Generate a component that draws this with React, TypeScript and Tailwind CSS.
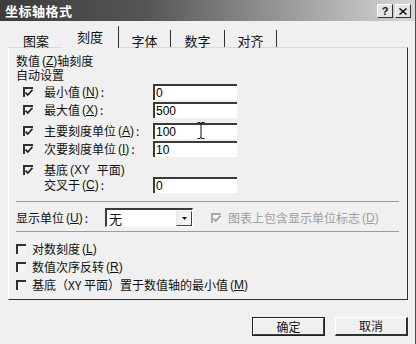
import React from "react";

const font = { fontFamily: '"Noto Sans CJK SC", "Liberation Sans", sans-serif' };

function Check({ checked, disabled }: { checked?: boolean; disabled?: boolean }) {
  const c = disabled ? "#9a9a9a" : "#202020";
  return (
    <div
      className={`relative w-[10px] h-[10px] shrink-0 border-t-2 border-l-2 ${
        disabled ? "border-[#a8a8a8]" : "border-[#303030]"
      } bg-[#f4f4f4]`}
    >
      {checked && (
        <svg width="8" height="8" viewBox="0 0 8 8" className="absolute left-0 top-0">
          <path d="M0.5 3.5 L2.8 6 L7.5 0.8" fill="none" stroke={c} strokeWidth="1.8" />
        </svg>
      )}
    </div>
  );
}

function TextBox({ value }: { value: string }) {
  return (
    <div
      className="w-[84px] h-[16px] bg-white border-t-2 border-l-2 border-[#3a3a3a] flex items-center pl-[1px] text-[12px] leading-none text-black"
      style={{ fontFamily: '"Liberation Sans", sans-serif' }}
    >
      {value}
    </div>
  );
}

function U({ c }: { c: string }) {
  return (
    <span style={{ fontFamily: '"Liberation Sans", sans-serif' }} className="ml-[2px] text-[12px] leading-none">
      (<span className="underline">{c}</span>)
    </span>
  );
}

function Row({
  label,
  m,
  value,
  className,
}: {
  label: string;
  m: string;
  value?: string;
  className: string;
}) {
  return (
    <div className={`flex items-center pl-[7px] ${className}`}>
      <Check checked />
      <div className="ml-[11px] w-[109px] h-[14px] flex items-center text-[12px] leading-none whitespace-nowrap">
        {label}
        <U c={m} />
        {value !== undefined ? <span className="ml-[2px]">:</span> : ""}
      </div>
      {value !== undefined && <TextBox value={value} />}
    </div>
  );
}

export default function App() {
  return (
    <div
      className="relative w-[416px] h-[344px] bg-[#f0f0f0] text-[#111] overflow-hidden border-r border-[#505050]"
      style={font}
    >
      {/* Title bar */}
      <div className="h-[21px] flex items-center justify-between pl-[5px] pr-[4px] bg-[linear-gradient(90deg,#3c3c3c_0%,#555555_35%,#d8d8d8_100%)]">
        <span className="text-white font-bold text-[13px] leading-none tracking-[0.5px]">坐标轴格式</span>
        <div className="flex gap-[2px] mt-[1px]">
          <div className="w-[16px] h-[14px] bg-[#e4e4e4] border-t border-l border-white border-b border-r border-b-[#303030] border-r-[#303030] flex items-center justify-center text-[11px] font-bold leading-none" style={{ fontFamily: '"Liberation Sans", sans-serif' }}>
            ?
          </div>
          <div className="w-[16px] h-[14px] bg-[#e4e4e4] border-t border-l border-white border-b border-r border-b-[#303030] border-r-[#303030] flex items-center justify-center">
            <svg width="8" height="7" viewBox="0 0 8 7">
              <path d="M0.5 0.5 L7.5 6.5 M7.5 0.5 L0.5 6.5" stroke="#111" strokeWidth="1.5" />
            </svg>
          </div>
        </div>
      </div>

      {/* Tabs */}
      <div className="h-[26px] flex items-end pl-[10px]">
        <div className="w-[52px] h-[17px] flex items-center justify-center pt-[3px] text-[13px] leading-none">图案</div>
        <div className="relative z-10 w-[57px] h-[22px] -mb-[1px] bg-[#f0f0f0] border-r border-[#303030] flex items-center justify-center pb-[2px] text-[13px] leading-none">
          刻度
        </div>
        <div className="w-[52px] h-[17px] border-r border-[#303030] flex items-center justify-center pt-[3px] text-[13px] leading-none">字体</div>
        <div className="w-[54px] h-[17px] border-r border-[#303030] flex items-center justify-center pt-[3px] text-[13px] leading-none">数字</div>
        <div className="w-[52px] h-[17px] border-r border-[#303030] flex items-center justify-center pt-[3px] text-[13px] leading-none">对齐</div>
      </div>

      {/* Panel */}
      <div className="ml-[8px] w-[400px] h-[253px] border-t border-l border-t-[#dadada] border-l-white border-r border-b border-r-[#303030] border-b-[#303030] pl-[7px] flex flex-col">
        <div className="mt-[6px] h-[14px] flex items-center text-[12px] leading-none whitespace-nowrap">
          数值<U c="Z" />轴刻度
        </div>
        <div className="h-[14px] flex items-center text-[12px] leading-none">自动设置</div>

        <Row label="最小值" m="N" value="0" className="mt-[2px] h-[16px]" />
        <Row label="最大值" m="X" value="500" className="mt-[2px] h-[16px]" />
        <Row label="主要刻度单位" m="A" value="100" className="mt-[5px] h-[16px]" />
        <Row label="次要刻度单位" m="I" value="10" className="mt-[2px] h-[16px]" />
        <div className="mt-[6px] h-[14px] flex items-center pl-[7px]">
          <Check checked />
          <div className="ml-[11px] h-[14px] flex items-center text-[12px] leading-none whitespace-nowrap">
            基底<span style={{ fontFamily: '"Liberation Sans", sans-serif' }} className="ml-[2px] text-[12px] leading-none">(XY&nbsp;&nbsp;</span>平面<span style={{ fontFamily: '"Liberation Sans", sans-serif' }} className="text-[12px] leading-none">)</span>
          </div>
        </div>
        <div className="h-[16px] flex items-center pl-[28px]">
          <div className="w-[109px] h-[14px] flex items-center text-[12px] leading-none whitespace-nowrap">
            交叉于<U c="C" /><span className="ml-[2px]">:</span>
          </div>
          <TextBox value="0" />
        </div>

        <div className="mt-[8px] w-[383px] h-px bg-[#9c9c9c]" />

        <div className="mt-[6px] h-[19px] flex items-center">
          <div className="w-[89px] h-[14px] flex items-center text-[12px] leading-none whitespace-nowrap">
            显示单位<U c="U" /><span className="ml-[2px]">:</span>
          </div>
          <div className="w-[88px] h-[19px] bg-white border-t-2 border-l-2 border-[#3a3a3a] border-b border-r border-b-white border-r-white flex items-center justify-between">
            <span className="pl-[2px] text-[13px] leading-none">无</span>
            <div className="w-[16px] h-[15px] bg-[#f2f2f2] border-t border-l border-t-[#e8e8e8] border-l-[#e8e8e8] border-b border-r border-b-[#404040] border-r-[#404040] flex items-center justify-center">
              <svg width="5" height="3" viewBox="0 0 5 3">
                <path d="M0 0 L5 0 L2.5 3 Z" fill="#111" />
              </svg>
            </div>
          </div>
          <div className="ml-[18px]">
            <Check checked disabled />
          </div>
          <div className="ml-[7px] h-[14px] flex items-center text-[12px] leading-none text-[#9e9e9e] whitespace-nowrap">
            图表上包含显示单位标志<U c="D" />
          </div>
        </div>

        <div className="mt-[4px] w-[383px] h-px bg-[#9c9c9c]" />

        <div className="mt-[8px] flex flex-col">
          <div className="h-[18px] flex items-center">
            <Check />
            <div className="ml-[6px] h-[14px] flex items-center text-[12px] leading-none whitespace-nowrap">
              对数刻度<U c="L" />
            </div>
          </div>
          <div className="h-[18px] flex items-center">
            <Check />
            <div className="ml-[6px] h-[14px] flex items-center text-[12px] leading-none whitespace-nowrap">
              数值次序反转<U c="R" />
            </div>
          </div>
          <div className="h-[18px] flex items-center">
            <Check />
            <div className="ml-[6px] h-[14px] flex items-center text-[12px] leading-none whitespace-nowrap">
              基底（XY 平面）置于数值轴的最小值<U c="M" />
            </div>
          </div>
        </div>
      </div>

      {/* Buttons */}
      <div className="mt-[17px] flex justify-end pr-[7px] gap-[10px]">
        <div className="w-[73px] h-[19px] border border-[#202020] flex">
          <div className="flex-1 border-t border-l border-white border-b border-r border-b-[#404040] border-r-[#404040] flex items-center justify-center text-[12px] leading-none">
            确定
          </div>
        </div>
        <div className="w-[73px] h-[19px] border-t border-l border-white border-b-2 border-r-2 border-b-[#303030] border-r-[#303030] flex items-center justify-center text-[12px] leading-none">
          取消
        </div>
      </div>

      {/* I-beam cursor */}
      <svg className="absolute left-[197px] top-[122px]" width="8" height="17" viewBox="0 0 8 17">
        <path d="M0.5 0.5 H3 M5 0.5 H7.5 M4 1 V16 M0.5 16.5 H3 M5 16.5 H7.5 M3 1 H5 M3 16 H5" stroke="#111" strokeWidth="1" fill="none" />
      </svg>
    </div>
  );
}
